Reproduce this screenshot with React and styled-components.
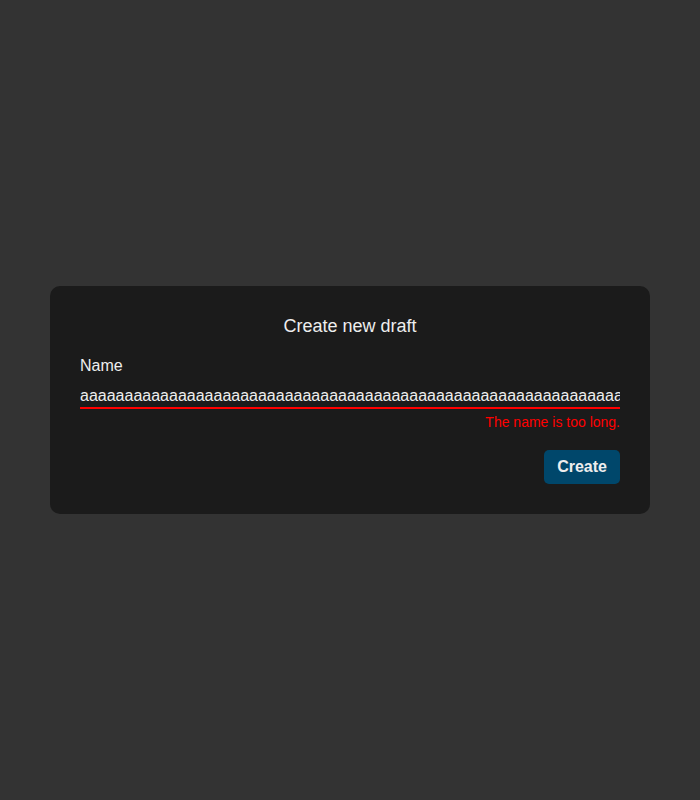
import React, { useState } from "react";
import styled, { createGlobalStyle } from "styled-components";

const GlobalStyle = createGlobalStyle`
  html, body {
    margin: 0;
    padding: 0;
    background: #333333;
    font-family: "Liberation Sans", Arial, sans-serif;
  }
`;

const Page = styled.div`
  width: 700px;
  height: 800px;
  display: flex;
  align-items: center;
  justify-content: center;
`;

const Modal = styled.form`
  width: 600px;
  box-sizing: border-box;
  padding: 30px;
  background: #1b1b1b;
  border-radius: 10px;
  display: flex;
  flex-direction: column;
  color: #eeeeee;
`;

const Title = styled.h2`
  margin: 0;
  font-size: 18px;
  font-weight: 400;
  line-height: 21px;
  text-align: center;
`;

const Label = styled.label`
  margin-top: 20px;
  font-size: 16px;
  line-height: 18px;
`;

const Input = styled.input`
  margin-top: 10px;
  width: 100%;
  box-sizing: border-box;
  height: 24px;
  padding: 0;
  border: none;
  border-bottom: 2px solid ${(p) => (p.$invalid ? "#ff0000" : "#888")};
  background: transparent;
  color: #eeeeee;
  font-family: inherit;
  font-size: 16px;
  outline: none;
`;

const ErrorText = styled.div`
  margin-top: 5px;
  font-size: 14px;
  line-height: 16px;
  color: #ff0000;
  text-align: right;
`;

const Actions = styled.div`
  margin-top: 20px;
  display: flex;
  justify-content: flex-end;
`;

const Button = styled.button`
  height: 34px;
  padding: 0 13px;
  border: none;
  border-radius: 5px;
  background: #00476b;
  color: #eeeeee;
  font-family: inherit;
  font-size: 16px;
  font-weight: 700;
  cursor: pointer;
`;

export default function App() {
  const [name, setName] = useState("a".repeat(80));
  const tooLong = name.length > 64;

  return (
    <>
      <GlobalStyle />
      <Page>
        <Modal onSubmit={(e) => e.preventDefault()}>
          <Title>Create new draft</Title>
          <Label htmlFor="draft-name">Name</Label>
          <Input
            id="draft-name"
            value={name}
            $invalid={tooLong}
            onChange={(e) => setName(e.target.value)}
          />
          {tooLong && <ErrorText>The name is too long.</ErrorText>}
          <Actions>
            <Button type="submit">Create</Button>
          </Actions>
        </Modal>
      </Page>
    </>
  );
}
